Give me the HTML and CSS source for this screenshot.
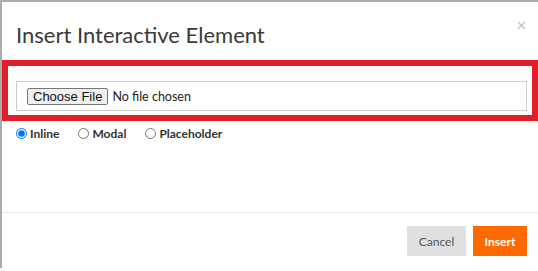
FILE: index.html
```html
<!DOCTYPE html>
<html lang="en">
<head>
    <meta charset="UTF-8">
    <title>Insert Interactive Element</title>
    <link rel="stylesheet" href="styles.css">
</head>
<body>
    <div class="modal">
        <div class="modal-header">
            <h4 class="modal-title">Insert Interactive Element</h4>
            <button class="close" aria-label="Close">
                <svg width="9" height="9" viewBox="0 0 9 9">
                    <path d="M1 1 L8 8 M8 1 L1 8" stroke="#c4c4c4" stroke-width="1.4" fill="none"/>
                </svg>
            </button>
        </div>
        <div class="modal-body">
            <div class="highlight">
                <div class="file-box">
                    <button class="file-btn">Choose File</button>
                    <span class="file-name">No file chosen</span>
                </div>
            </div>
            <div class="radio-row">
                <label class="radio"><input type="radio" name="mode" checked> Inline</label>
                <label class="radio"><input type="radio" name="mode"> Modal</label>
                <label class="radio"><input type="radio" name="mode"> Placeholder</label>
            </div>
        </div>
        <div class="modal-footer">
            <button class="btn btn-cancel">Cancel</button>
            <button class="btn btn-insert">Insert</button>
        </div>
    </div>
</body>
</html>
```

FILE: styles.css
```css
body {
    margin: 0;
    padding: 0;
    background: #fff;
    font-family: Lato, "Open Sans", sans-serif;
    color: #333;
    overflow: hidden;
}

.modal {
    width: 536px;
    height: 266px;
    border-top: 2px solid #acacac;
    border-left: 2px solid #acacac;
    box-shadow: 0 2px 0 #9a9a9a, 0 3px 1px #d0d0d0;
    display: flex;
    flex-direction: column;
    background: #fff;
}

.modal-header {
    height: 58px;
    display: flex;
    align-items: flex-start;
    justify-content: space-between;
    padding: 0 14px;
    box-sizing: border-box;
}

.modal-title {
    margin: 0;
    padding-top: 20px;
    font-size: 22px;
    font-weight: 400;
    color: #3a3a3a;
    line-height: 26px;
}

.close {
    background: none;
    border: none;
    padding: 0;
    margin-top: 19px;
    margin-right: -2px;
    line-height: 0;
}

.modal-body {
    flex: 1;
}

.highlight {
    border: 6px solid #e31e2b;
    padding: 15px 5px 4px 8px;
}

.file-box {
    height: 30px;
    border: 1px solid #cccccc;
    box-sizing: border-box;
    display: flex;
    align-items: center;
    padding-left: 10px;
}

.file-btn {
    font-family: "Liberation Sans", Arial, sans-serif;
    font-size: 13px;
    height: 17px;
    padding: 0 5px;
    line-height: 15px;
    background: #efefef;
    border: 1px solid #767676;
    border-radius: 2px;
    color: #111;
}

.file-name {
    margin-left: 4px;
    font-size: 12.5px;
    color: #222;
}

.radio-row {
    display: flex;
    gap: 19px;
    padding: 5px 0 0 14px;
}

.radio {
    display: flex;
    align-items: center;
    font-size: 12px;
    font-weight: 700;
    color: #333;
}

.radio input {
    width: 11px;
    height: 11px;
    margin: 0 3px 0 0;
}

.modal-footer {
    border-top: 1px solid #e5e5e5;
    height: 56px;
    box-sizing: border-box;
    display: flex;
    justify-content: flex-end;
    align-items: flex-start;
    gap: 7px;
    padding: 13px 11px 0 0;
}

.btn {
    height: 30px;
    border: none;
    font-family: Lato, sans-serif;
    font-size: 12px;
    padding: 0 11px;
}

.btn-cancel {
    width: 59px;
    background: #e0e0e0;
    color: #555;
}

.btn-insert {
    width: 54px;
    background: #ff6a00;
    color: #fff;
    font-weight: 700;
}
```
